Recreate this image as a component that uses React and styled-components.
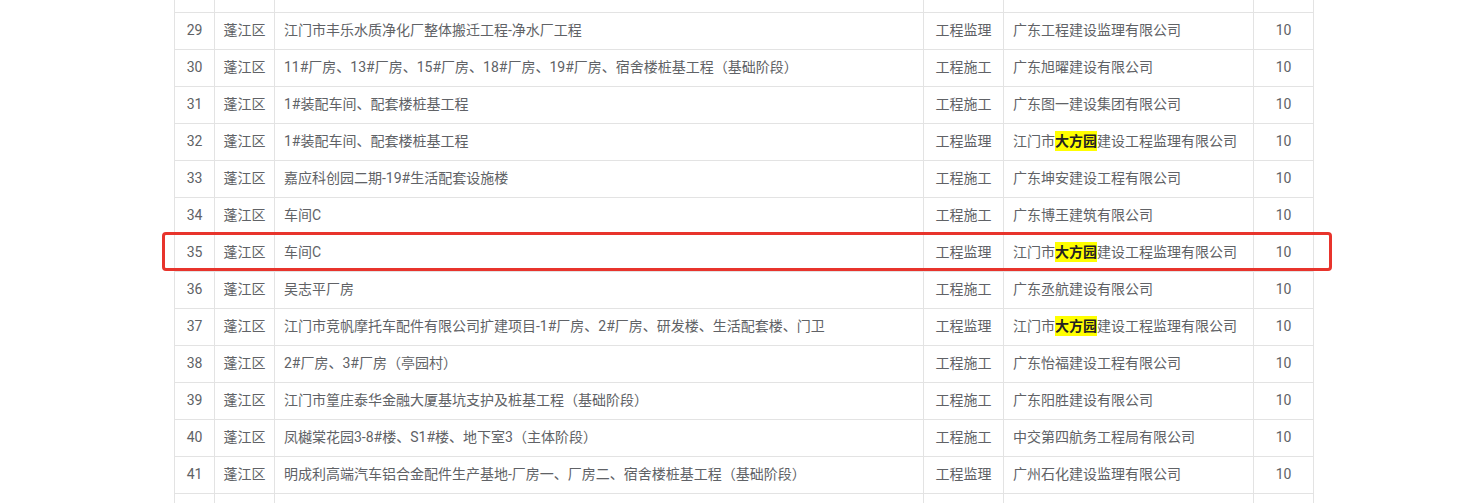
import React from "react";
import styled, { createGlobalStyle } from "styled-components";

const Global = createGlobalStyle`
  html, body { margin: 0; padding: 0; background: #fff; overflow: hidden; }
  body { font-family: Roboto, "Noto Sans CJK SC", "Noto Sans", sans-serif; }
`;

const Page = styled.div`
  width: 1465px;
  height: 503px;
  overflow: hidden;
`;

const Table = styled.div`
  margin-top: -24px;
  margin-left: 174px;
  width: 1139px;
  border-left: 1px solid #e3e3e3;
`;

const Row = styled.div`
  position: relative;
  display: grid;
  grid-template-columns: 40px 60px 649px 80px 250px 60px;
  height: 37px;
  box-sizing: border-box;
  border-bottom: 1px solid #e3e3e3;
`;

const Cell = styled.div`
  box-sizing: border-box;
  border-right: 1px solid #e3e3e3;
  display: flex;
  align-items: center;
  justify-content: ${(p) => (p.$left ? "flex-start" : "center")};
  padding: ${(p) => (p.$left ? "0 9px 3px" : "0 0 3px")};
  font-size: 14px;
  line-height: 20px;
  color: #606266;
  white-space: nowrap;
  overflow: hidden;
`;

const Mark = styled.span`
  background: #ffff00;
  color: #222;
  font-weight: 700;
`;

const Highlight = styled.div`
  position: absolute;
  left: -13px;
  top: -3px;
  width: 1170px;
  height: 39px;
  box-sizing: border-box;
  border: 3px solid #e8342c;
  border-radius: 4px;
  pointer-events: none;
`;

const DFY = (
  <>
    江门市<Mark>大方园</Mark>建设工程监理有限公司
  </>
);

const rows = [
  { n: "", d: "", p: "", t: "", c: "", s: "" },
  { n: "29", d: "蓬江区", p: "江门市丰乐水质净化厂整体搬迁工程-净水厂工程", t: "工程监理", c: "广东工程建设监理有限公司", s: "10" },
  { n: "30", d: "蓬江区", p: "11#厂房、13#厂房、15#厂房、18#厂房、19#厂房、宿舍楼桩基工程（基础阶段）", t: "工程施工", c: "广东旭曜建设有限公司", s: "10" },
  { n: "31", d: "蓬江区", p: "1#装配车间、配套楼桩基工程", t: "工程施工", c: "广东图一建设集团有限公司", s: "10" },
  { n: "32", d: "蓬江区", p: "1#装配车间、配套楼桩基工程", t: "工程监理", c: DFY, s: "10" },
  { n: "33", d: "蓬江区", p: "嘉应科创园二期-19#生活配套设施楼", t: "工程施工", c: "广东坤安建设工程有限公司", s: "10" },
  { n: "34", d: "蓬江区", p: "车间C", t: "工程施工", c: "广东博王建筑有限公司", s: "10" },
  { n: "35", d: "蓬江区", p: "车间C", t: "工程监理", c: DFY, s: "10", hl: true },
  { n: "36", d: "蓬江区", p: "吴志平厂房", t: "工程施工", c: "广东丞航建设有限公司", s: "10" },
  { n: "37", d: "蓬江区", p: "江门市竞帆摩托车配件有限公司扩建项目-1#厂房、2#厂房、研发楼、生活配套楼、门卫", t: "工程监理", c: DFY, s: "10" },
  { n: "38", d: "蓬江区", p: "2#厂房、3#厂房（亭园村）", t: "工程施工", c: "广东怡福建设工程有限公司", s: "10" },
  { n: "39", d: "蓬江区", p: "江门市篁庄泰华金融大厦基坑支护及桩基工程（基础阶段）", t: "工程施工", c: "广东阳胜建设有限公司", s: "10" },
  { n: "40", d: "蓬江区", p: "凤樾棠花园3-8#楼、S1#楼、地下室3（主体阶段）", t: "工程施工", c: "中交第四航务工程局有限公司", s: "10" },
  { n: "41", d: "蓬江区", p: "明成利高端汽车铝合金配件生产基地-厂房一、厂房二、宿舍楼桩基工程（基础阶段）", t: "工程监理", c: "广州石化建设监理有限公司", s: "10" },
  { n: "", d: "", p: "", t: "", c: "", s: "" },
];

export default function App() {
  return (
    <Page>
      <Global />
      <Table>
        {rows.map((r, i) => (
          <Row key={i}>
            <Cell>{r.n}</Cell>
            <Cell>{r.d}</Cell>
            <Cell $left>{r.p}</Cell>
            <Cell>{r.t}</Cell>
            <Cell $left>{r.c}</Cell>
            <Cell>{r.s}</Cell>
            {r.hl && <Highlight />}
          </Row>
        ))}
      </Table>
    </Page>
  );
}
